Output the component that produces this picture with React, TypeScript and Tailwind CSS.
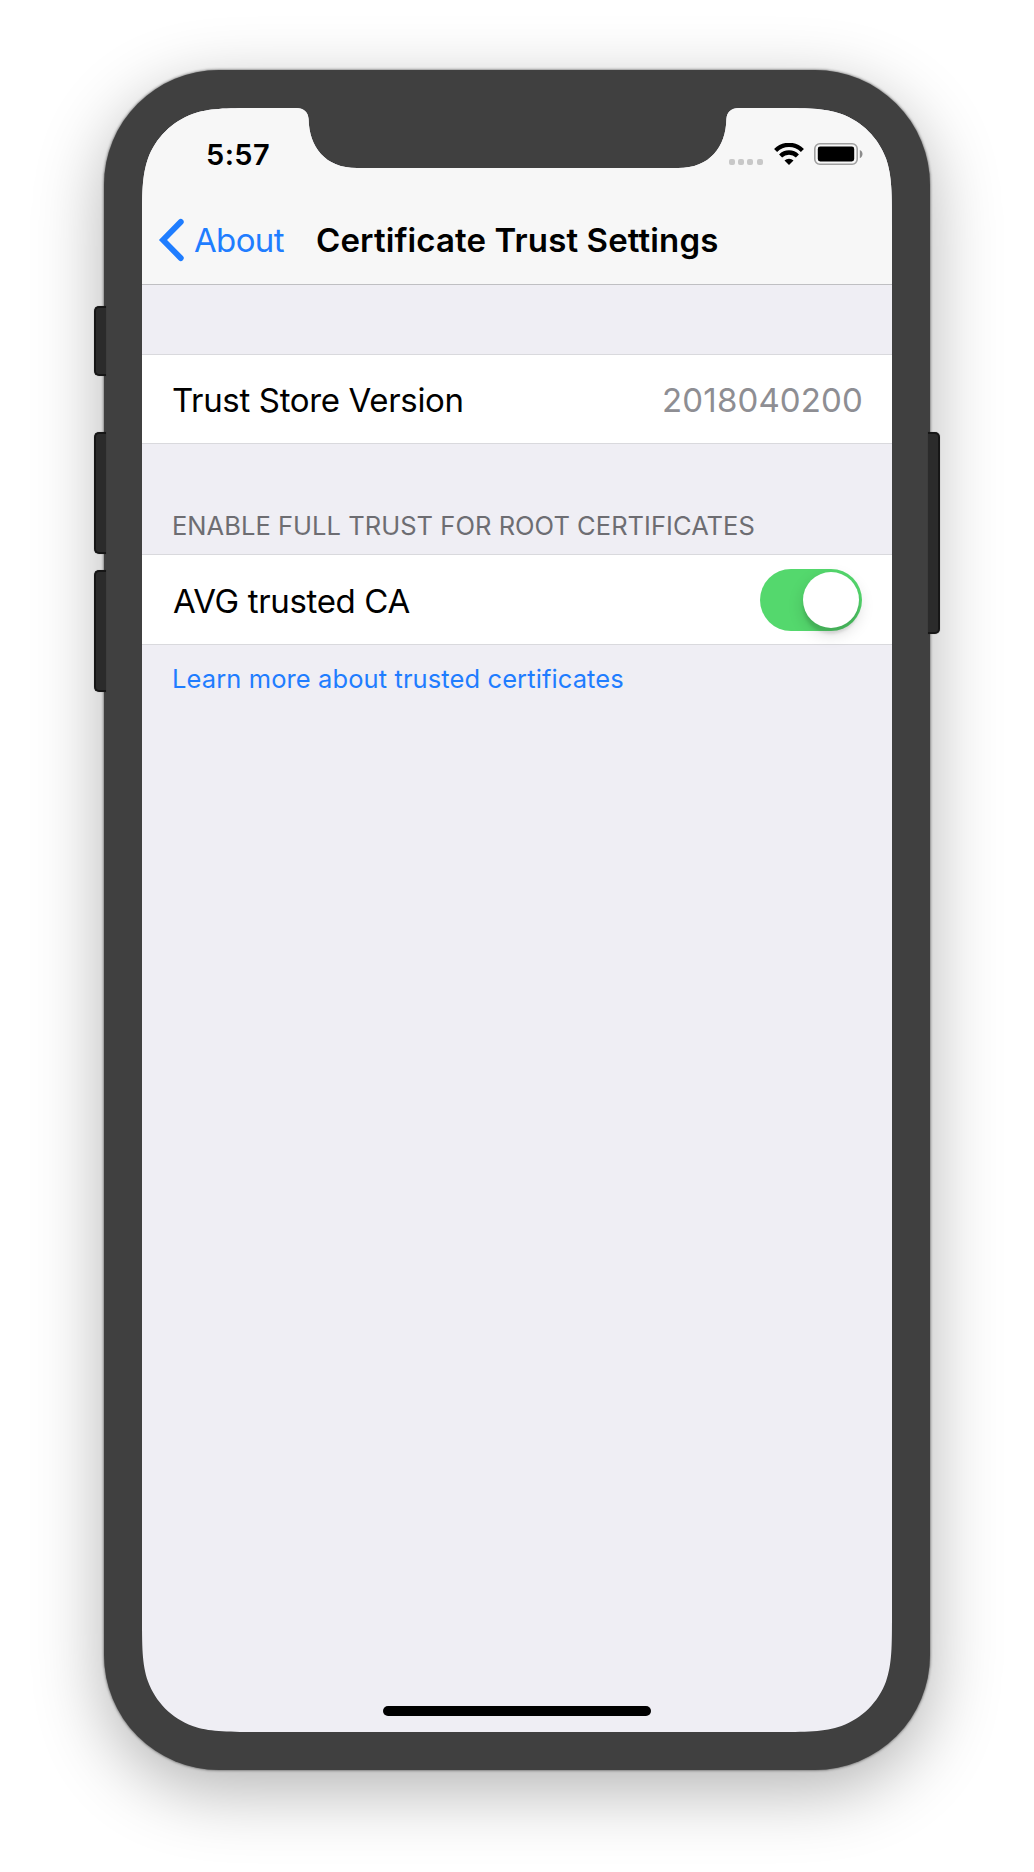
import type { ReactNode } from 'react';

function SideButton({ className }: { className: string }) {
  return <div className={`absolute w-3 border-[#161616] bg-[#2b2b2b] shadow-[0_0_1px_rgba(0,0,0,0.4)] ${className}`} />;
}

function Chevron() {
  return (
    <svg width="26" height="44" viewBox="0 0 26 44" fill="none" stroke="#1f7dff" strokeWidth="5.8" strokeLinecap="round" strokeLinejoin="miter">
      <path d="M22.8 3.9 L5 22 L22.8 40.1" />
    </svg>
  );
}

function SignalDots() {
  return (
    <div className="mt-[15px] flex gap-[3.33px]">
      {[0, 1, 2, 3].map((i) => (
        <span key={i} className="size-[6px] rounded-[2px] bg-[#c8c8c8]" />
      ))}
    </div>
  );
}

function WifiIcon() {
  return (
    <svg width="30" height="22" viewBox="0 0 30 22" fill="none" stroke="#000" strokeWidth="4.3">
      <path d="M1.6 7.4 A19 19 0 0 1 28.4 7.4" />
      <path d="M6.6 13 A11.8 11.8 0 0 1 23.4 13" />
      <path d="M15 22 L10.5 17.6 A6.2 6.2 0 0 1 19.5 17.6 Z" fill="#000" stroke="none" />
    </svg>
  );
}

function BatteryIcon() {
  return (
    <svg width="49" height="22" viewBox="0 0 49 22">
      <rect x="0.8" y="0.8" width="42.4" height="20.4" rx="5" fill="none" stroke="#a0a0a0" strokeWidth="1.6" />
      <rect x="3.8" y="3.6" width="36.4" height="14.8" rx="2.4" fill="#000" />
      <path d="M45.8 7 C49.4 8.2 49.4 14 45.8 15.2 Z" fill="#8c8c8c" />
    </svg>
  );
}

function Row({ label, className, children }: { label: ReactNode; className: string; children: ReactNode }) {
  return (
    <div className={`flex items-center justify-between border-b border-[#d9d9dd] bg-white pr-[29px] ${className}`}>
      <span className="pt-[2px] text-[33px] leading-10 tracking-[-0.34px]">{label}</span>
      {children}
    </div>
  );
}

function Toggle() {
  return (
    <div className="mt-px mr-px flex h-[62px] w-[102px] items-center justify-end rounded-full bg-[#54d86d] pr-[3px]">
      <div className="size-14 rounded-full bg-white shadow-[0_6px_16px_rgba(0,0,0,0.15),0_6px_3px_rgba(0,0,0,0.1)]" />
    </div>
  );
}

export default function App() {
  return (
    <div className="flex h-[1872px] w-[1034px] items-start justify-center overflow-hidden bg-white pt-[70px] font-['Inter',sans-serif] text-black">
      <div className="relative h-[1700px] w-[826px] rounded-[115px] bg-[#404040] p-[38px] shadow-[0_20px_70px_rgba(0,0,0,0.3),0_0_3px_rgba(0,0,0,0.7)]">
        <SideButton className="top-[236px] -left-[10px] h-[70px] rounded-l-[5px] border-y-2 border-l-2" />
        <SideButton className="top-[362px] -left-[10px] h-[122px] rounded-l-[5px] border-y-2 border-l-2" />
        <SideButton className="top-[500px] -left-[10px] h-[122px] rounded-l-[5px] border-y-2 border-l-2" />
        <SideButton className="top-[362px] -right-[10px] h-[202px] rounded-r-[5px] border-y-2 border-r-2" />

        <div className="flex h-[1624px] w-[750px] flex-col bg-[#efeef4] [clip-path:path('M120,0_H154_C162,0_166,4_166.6,11_C167.2,39_183,60_215,60_H536_C568,60_583.8,39_584.4,11_C585,4_589,0_597,0_H630_C665,0_682,0_699.5,6_C720,13.5_736.5,30_744,50.5_C750,68_750,85_750,120_V1504_C750,1539_750,1556_744,1573.5_C736.5,1594_720,1610.5_699.5,1618_C682,1624_665,1624_630,1624_H120_C85,1624_68,1624_50.5,1618_C30,1610.5_13.5,1594_6,1573.5_C0,1556_0,1539_0,1504_V120_C0,85_0,68_6,50.5_C13.5,30_30,13.5_50.5,6_C68,0_85,0_120,0_Z')]">
          <header className="border-b border-[#bfbfc2] bg-[#f7f7f7]">
            <div className="flex h-[88px] items-center justify-between pt-1 pr-[29px] pl-[64px]">
              <span className="pt-px text-[29px] leading-9 font-semibold tracking-[0.4px]">5:57</span>
              <div className="flex items-center">
                <SignalDots />
                <div className="ml-[11px]"><WifiIcon /></div>
                <div className="ml-[10.5px]"><BatteryIcon /></div>
              </div>
            </div>
            <div className="flex h-[88px] items-center pl-4">
              <Chevron />
              <span className="ml-[10px] w-[122px] text-[33px] leading-10 tracking-[-0.65px] text-[#1f7dff]">About</span>
              <h1 className="text-[33px] leading-10 font-semibold tracking-[0.12px] whitespace-nowrap">Certificate Trust Settings</h1>
            </div>
          </header>

          <Row label="Trust Store Version" className="mt-[69px] h-[90px] border-t pl-[30px]">
            <span className="pt-[2px] text-[33px] leading-10 tracking-[0.14px] text-[#8e8e93]">2018040200</span>
          </Row>

          <h2 className="mt-[66px] h-[44px] pl-[30px] text-[25.5px] leading-8 tracking-[0.04px] whitespace-nowrap text-[#6d6d72]">
            ENABLE FULL TRUST FOR ROOT CERTIFICATES
          </h2>

          <Row label="AVG trusted CA" className="h-[91px] border-t pl-[31px]">
            <Toggle />
          </Row>

          <a className="mt-[18px] pl-[30px] text-[25.5px] leading-8 tracking-[0.1px] text-[#1f7dff]">Learn more about trusted certificates</a>

          <div className="mt-auto mb-4 h-[10px] w-[268px] self-center rounded-full bg-black" />
        </div>
      </div>
    </div>
  );
}
